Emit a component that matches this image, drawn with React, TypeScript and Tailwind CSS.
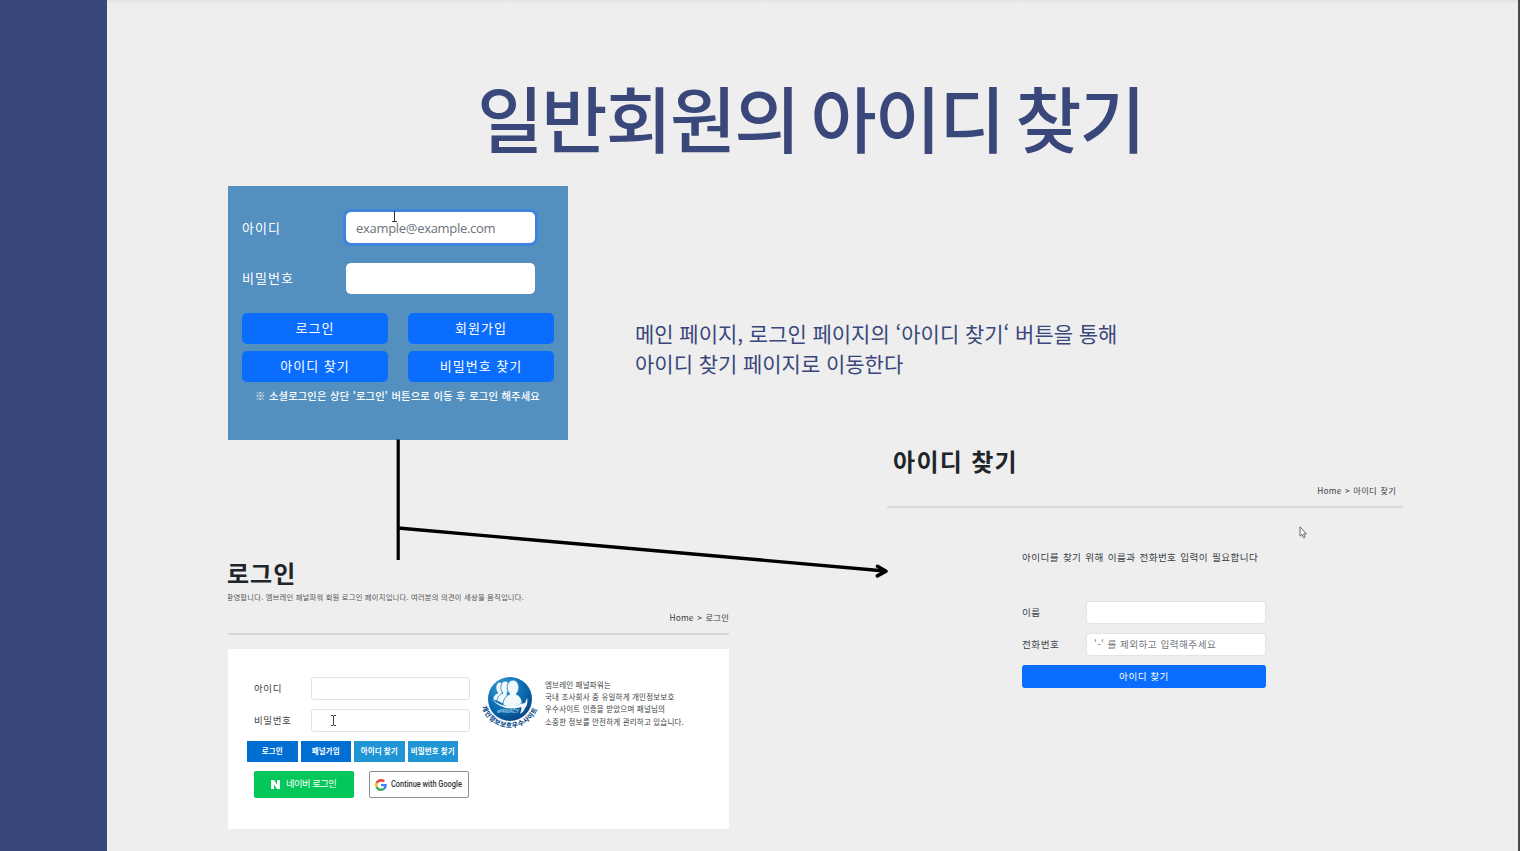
import type { ReactNode } from "react";

const KR = "font-['Noto_Sans_CJK_KR',sans-serif]";

function IBeam({ className }: { className: string }) {
  return (
    <svg viewBox="0 0 7 11" width="7" height="11" className={className} fill="none" stroke="#444" strokeWidth="1">
      <path d="M1 .5h2l.5.5.5-.5h2M3.5 1v9M1 10.5h2l.5-.5.5.5h2" />
    </svg>
  );
}

function PanelButton({ children }: { children: ReactNode }) {
  return (
    <button className="flex h-[31px] w-[146px] items-center justify-center rounded-[5px] bg-[#0a6dfe] pb-[3px] text-[13px] leading-none tracking-[1px] text-white">
      {children}
    </button>
  );
}

function LoginPanel() {
  return (
    <section className="h-[254px] w-[340px] bg-[#5490bf] pl-[14px] pt-[26px] text-[13px] tracking-[1px] text-white">
      <div className="flex h-[31px] items-center">
        <label className="w-[104px] pb-px leading-none">아이디</label>
        <div className="relative flex h-[31px] w-[189px] items-center rounded-[5px] bg-white pl-[10px] pt-[2px] font-['Open_Sans',sans-serif] text-[13px] tracking-[-0.3px] text-[#6c7279] ring-[3px] ring-[#3f84da]">
          example@example.com
          <svg viewBox="0 0 7 11" width="7" height="11" className="absolute left-[45px] top-[-1px]" fill="none" stroke="#333">
            <path d="M3.5 0v10M1 10.5h5" />
          </svg>
        </div>
      </div>
      <div className="mt-5 flex h-[31px] items-center">
        <label className="w-[104px] pb-[2px] leading-none">비밀번호</label>
        <div className="h-[31px] w-[189px] rounded-[5px] bg-white" />
      </div>
      <div className="mt-[19px] grid w-[312px] grid-cols-2 gap-x-5 gap-y-[7px]">
        <PanelButton>로그인</PanelButton>
        <PanelButton>회원가입</PanelButton>
        <PanelButton>아이디 찾기</PanelButton>
        <PanelButton>비밀번호 찾기</PanelButton>
      </div>
      <p className="mt-[7px] whitespace-nowrap pl-[13px] text-[10.3px] font-medium leading-[14px] tracking-[0.15px] [word-spacing:0.4px]">
        ※ 소셜로그인은 상단 '로그인' 버튼으로 이동 후 로그인 해주세요
      </p>
    </section>
  );
}

function PrivacyBadge() {
  return (
    <svg viewBox="0 0 60 62" width="60" height="62" className="shrink-0">
      <defs>
        <radialGradient id="badge" cx="0.35" cy="0.25" r="0.85">
          <stop offset="0" stopColor="#3a9ed6" />
          <stop offset="0.5" stopColor="#0b70b5" />
          <stop offset="1" stopColor="#07417f" />
        </radialGradient>
        <path id="badgeArc" d="M2 35 A29.4 29.4 0 0 0 58.2 35" />
      </defs>
      <circle cx="30" cy="27" r="22" fill="url(#badge)" />
      <g fill="#f2f9fd" stroke="#1878b8" strokeWidth="0.8">
        <path d="M18 29l-5-1c0-4 2-6 5-7-4-4-2-11 2-11s5 7 2 11v8z" />
        <path d="M24 32l-7-3c0-4 3-7 6-8-4-4-2-12 2-12 5 0 5 8 2 12l1 10z" />
        <path d="M23 33c0-6 3-9 7-11-5-4-3-14 3-14s8 10 3 14c4 2 6 5 6 9-5 4-13 5-19 2z" />
      </g>
      <path d="M13 28c6 6 18 8 27 4l5-1 2-5c1 4 0 8-2 10-1 3-3 5-5 6 1-3 2-5 1-7-11 4-23 0-28-7z" fill="#f2f9fd" />
      <text x="17" y="41" fontSize="4.8" fontWeight="700" fontStyle="italic" fill="#8dc7e8" textLength="22" className="font-['Liberation_Sans',sans-serif]">
        ePRIVACY
      </text>
      <text fontSize="6.6" fontWeight="900" fill="#14508a" className={KR}>
        <textPath href="#badgeArc" textLength="72">
          개인정보보호우수사이트
        </textPath>
      </text>
    </svg>
  );
}

function GoogleMark() {
  return (
    <svg viewBox="0 0 48 48" width="12" height="12" className="shrink-0">
      <path fill="#EA4335" d="M24 9.5c3.54 0 6.71 1.22 9.21 3.6l6.85-6.85C35.9 2.38 30.47 0 24 0 14.62 0 6.51 5.38 2.56 13.22l7.98 6.19C12.43 13.72 17.74 9.5 24 9.5z" />
      <path fill="#4285F4" d="M46.98 24.55c0-1.57-.15-3.09-.38-4.55H24v9.02h12.94c-.58 2.96-2.26 5.48-4.78 7.18l7.73 6c4.51-4.18 7.09-10.36 7.09-17.65z" />
      <path fill="#FBBC05" d="M10.53 28.59c-.48-1.45-.76-2.99-.76-4.59s.27-3.14.76-4.59l-7.98-6.19C.92 16.46 0 20.12 0 24c0 3.88.92 7.54 2.56 10.78l7.97-6.19z" />
      <path fill="#34A853" d="M24 48c6.48 0 11.93-2.13 15.89-5.81l-7.73-6c-2.15 1.45-4.92 2.3-8.16 2.3-6.26 0-11.57-4.22-13.47-9.91l-7.98 6.19C6.51 42.62 14.62 48 24 48z" />
    </svg>
  );
}

function LoginPage() {
  return (
    <section className="w-[501px] pt-[119px] text-[#3b3f43]">
      <h2 className="-ml-px h-7 text-[24px] font-bold leading-[27px] tracking-[1px] text-[#212529]">로그인</h2>
      <div className="flex h-5 w-[296px] justify-end overflow-hidden">
        <p className="whitespace-nowrap text-[7.3px] leading-5 tracking-[0.22px] text-[#555]">
          환영합니다. 엠브레인 패널파워 회원 로그인 페이지입니다. 여러분의 의견이 세상을 움직입니다.
        </p>
      </div>
      <p className="h-[22px] text-right text-[8.3px] leading-[21px] tracking-[0.2px] [word-spacing:1px]">Home &gt; 로그인</p>
      <div className="mt-1 h-[2px] bg-[#d5d6d7]" />
      <div className="mt-[14px] flex h-[180px] bg-white pl-[19px] pt-7">
        <div className="w-[233px] text-[9.5px] tracking-[0.6px]">
          <div className="flex h-[23px] items-center pl-[7px]">
            <label className="w-[57px] leading-none">아이디</label>
            <div className="h-[23px] w-[159px] rounded-[3px] border border-[#e0e3e6]" />
          </div>
          <div className="mt-[9px] flex h-[23px] items-center pl-[7px]">
            <label className="w-[57px] leading-none">비밀번호</label>
            <div className="flex h-[23px] w-[159px] items-center rounded-[3px] border border-[#e0e3e6] pl-[18px]">
              <IBeam className="" />
            </div>
          </div>
          <div className="mt-[9px] flex gap-[3px] text-[7.5px] font-bold leading-[19px] tracking-[0.1px] text-white">
            <button className="h-[21px] w-[50.5px] bg-[#006fd3] pb-[2px]">로그인</button>
            <button className="h-[21px] w-[50.5px] bg-[#006fd3] pb-[2px]">패널가입</button>
            <button className="h-[21px] w-[50.5px] whitespace-nowrap bg-[#2095d5] pb-[2px]">아이디 찾기</button>
            <button className="h-[21px] w-[50.5px] whitespace-nowrap bg-[#2095d5] pb-[2px]">비밀번호 찾기</button>
          </div>
          <div className="mt-[9px] flex gap-[15px] pl-[7px]">
            <button className="flex h-[27px] w-[100px] items-center rounded-[2px] bg-[#04c75a] pl-[17px] text-white">
              <svg viewBox="0 0 9 9" width="9" height="9">
                <path d="M0 0h3l3 4.6V0h3v9H6L3 4.4V9H0z" fill="#fff" />
              </svg>
              <span className="ml-[6px] whitespace-nowrap pb-px text-[9.3px] leading-none tracking-[-0.5px]">네이버 로그인</span>
            </button>
            <button className="flex h-[27px] w-[100px] items-center rounded-[2px] border border-[#8b8d90] bg-white pl-[5px]">
              <GoogleMark />
              <span className="ml-[4px] inline-block w-[88px] shrink-0 origin-left scale-x-[0.79] whitespace-nowrap pb-px text-left font-[Roboto,sans-serif] text-[9.4px] font-medium leading-none tracking-normal text-[#333]">
                Continue with Google
              </span>
            </button>
          </div>
        </div>
        <div className="-mt-[5px] flex">
          <PrivacyBadge />
          <p className="ml-[5px] mt-[7px] whitespace-nowrap text-[7.5px] leading-[12.2px] tracking-[0.18px]">
            엠브레인 패널파워는
            <br />
            국내 조사회사 중 유일하게 개인정보보호
            <br />
            우수사이트 인증을 받았으며 패널님의
            <br />
            소중한 정보를 안전하게 관리하고 있습니다.
          </p>
        </div>
      </div>
    </section>
  );
}

function FindIdPage() {
  return (
    <section className="ml-[158px] w-[516px] pt-[7px] text-[#3b3f43]">
      <h2 className="h-7 pl-[6px] text-[24px] font-bold leading-[27px] tracking-[1.3px] text-[#212529]">아이디 찾기</h2>
      <p className="mt-[5px] h-[22px] pr-[7px] text-right text-[8.3px] leading-[21px] tracking-[0.2px] [word-spacing:1px]">Home &gt; 아이디 찾기</p>
      <div className="mt-1 h-[2px] bg-[#d8d9da]" />
      <div className="flex h-[39px] justify-end pr-[96px] pt-[18px]">
        <svg viewBox="0 0 8 13" width="8" height="13">
          <path d="M1 .8v9.4l2.1-1.8 1.4 3.3 1.5-.7-1.4-3.1h2.7z" fill="#fff" stroke="#444" strokeWidth="0.8" />
        </svg>
      </div>
      <div className="w-[380px] pl-[135px] text-[9.6px] tracking-[0.5px]">
        <p className="h-5 whitespace-nowrap leading-[20px] tracking-[0.4px] [word-spacing:0.9px]">
          아이디를 찾기 위해 이름과 전화번호 입력이 필요합니다
        </p>
        <div className="mt-[34px] flex h-[23px] items-center">
          <label className="w-16 leading-none">이름</label>
          <div className="h-[23px] w-[180px] rounded-[3px] border border-[#e2e4e6] bg-white" />
        </div>
        <div className="mt-[9px] flex h-[23px] items-center">
          <label className="w-16 leading-none">전화번호</label>
          <div className="flex h-[23px] w-[180px] items-center whitespace-nowrap rounded-[3px] border border-[#e2e4e6] bg-white pl-[7px] leading-none text-[#71767b]">
            '-' 를 제외하고 입력해주세요
          </div>
        </div>
        <button className="mt-[9px] flex h-[23px] w-[244px] items-center justify-center rounded-[3px] bg-[#0a6dfe] leading-none text-white">
          아이디 찾기
        </button>
      </div>
    </section>
  );
}

export default function App() {
  return (
    <div lang="ko" className="relative flex h-[851px] w-[1520px] overflow-hidden bg-[#eeeeee] font-['Noto_Sans_CJK_KR',sans-serif]">
      <aside className="w-[107px] shrink-0 bg-[#3a477b]" />
      <main className="w-[1411px] shrink-0">
        <div className="h-1 bg-linear-to-b from-[#e2e2e2] to-[#eeeeee]" />
        <h1 className="h-[182px] whitespace-nowrap pl-[370px] pt-[58px] text-[72px] font-medium leading-[108px] tracking-[-1.9px] text-[#3a477b] [word-spacing:-6.5px]">
          일반회원의 아이디 찾기
        </h1>
        <div className="flex pl-[121px]">
          <LoginPanel />
          <p className="ml-[67px] whitespace-nowrap pt-[132px] text-[21px] leading-[30px] text-[#3a477b] [word-spacing:-0.2px]">
            메인 페이지, 로그인 페이지의 ‘아이디 찾기‘ 버튼을 통해
            <br />
            아이디 찾기 페이지로 이동한다
          </p>
        </div>
        <div className="flex pl-[121px]">
          <LoginPage />
          <FindIdPage />
        </div>
      </main>
      <div className="w-[2px] shrink-0 bg-[#47494a]" />
      <svg viewBox="0 0 500 125" width="500" height="125" className="pointer-events-none absolute left-[390px] top-[438px]" fill="none" stroke="#000" overflow="visible">
        <path d="M8.2 1.5v120.500" strokeWidth="3.2" />
        <path d="M8 90L495 133" strokeWidth="3.4" />
        <path d="M487.500 128.300l8.500 4.900-8.700 4.700" strokeWidth="3.6" strokeLinecap="round" strokeLinejoin="round" />
      </svg>
    </div>
  );
}
